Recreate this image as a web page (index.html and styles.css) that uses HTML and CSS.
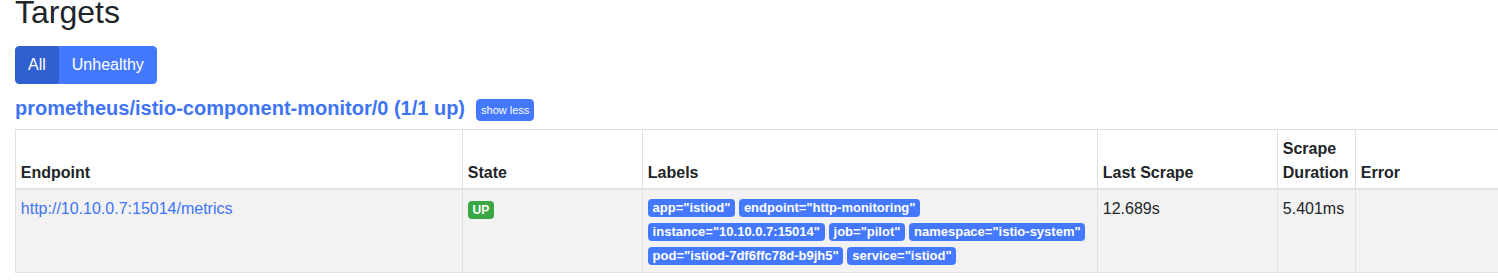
FILE: index.html
```html
<!DOCTYPE html>
<html lang="en">
<head>
    <meta charset="UTF-8">
    <meta name="viewport" content="width=device-width, initial-scale=1.0">
    <title>Targets</title>
    <link rel="stylesheet" href="styles.css">
</head>
<body>
    <div class="page">
        <h2 class="title">Targets</h2>
        <div class="filter">
            <span class="btn active">All</span>
            <span class="btn">Unhealthy</span>
        </div>
        <div class="pool-head">
            <a class="pool-name" href="#">prometheus/istio-component-monitor/0 (1/1 up)</a>
            <span class="btn-xs">show less</span>
        </div>
        <table class="targets">
            <colgroup>
                <col class="c-endpoint">
                <col class="c-state">
                <col class="c-labels">
                <col class="c-last">
                <col class="c-duration">
                <col class="c-error">
            </colgroup>
            <thead>
                <tr>
                    <th>Endpoint</th>
                    <th>State</th>
                    <th>Labels</th>
                    <th>Last Scrape</th>
                    <th>Scrape Duration</th>
                    <th>Error</th>
                </tr>
            </thead>
            <tbody>
                <tr>
                    <td><a href="#">http://10.10.0.7:15014/metrics</a></td>
                    <td><span class="badge up">UP</span></td>
                    <td>
                        <div class="labels">
                            <span class="badge label">app="istiod"</span>
                            <span class="badge label">endpoint="http-monitoring"</span>
                            <span class="badge label">instance="10.10.0.7:15014"</span>
                            <span class="badge label">job="pilot"</span>
                            <span class="badge label">namespace="istio-system"</span>
                            <span class="badge label">pod="istiod-7df6ffc78d-b9jh5"</span>
                            <span class="badge label">service="istiod"</span>
                        </div>
                    </td>
                    <td>12.689s</td>
                    <td>5.401ms</td>
                    <td></td>
                </tr>
            </tbody>
        </table>
    </div>
</body>
</html>
```
FILE: styles.css
```css
body {
    margin: 0;
    overflow: hidden;
    font-family: "Liberation Sans", Arial, sans-serif;
    font-size: 16px;
    line-height: 1.5;
    color: #212529;
    background: #fff;
}
a {
    color: #3f74f5;
    text-decoration: none;
}
.page {
    padding-left: 15px;
}
.title {
    margin: -7px 0 0;
    font-size: 32px;
    font-weight: 400;
    line-height: 1.2;
}
.filter {
    display: flex;
    margin-top: 14.6px;
}
.btn {
    display: inline-block;
    padding: 6px 12px;
    border: 1px solid #4479ff;
    background: #4479ff;
    color: #fff;
}
.btn:first-child {
    border-radius: 4px 0 0 4px;
}
.btn:last-child {
    border-radius: 0 4px 4px 0;
}
.btn.active {
    background: #305fcf;
    border-color: #305fcf;
}
.pool-head {
    display: flex;
    align-items: center;
    gap: 11px;
    margin-top: 12px;
    margin-bottom: 8.5px;
}
.pool-name {
    font-size: 20px;
    font-weight: 700;
    line-height: 1.2;
}
.btn-xs {
    display: inline-block;
    padding: 2px 4px;
    font-size: 11px;
    line-height: 16px;
    color: #fff;
    background: #4479ff;
    border: 1px solid #4479ff;
    border-radius: 4px;
    margin-top: 3px;
}
.targets {
    border-collapse: collapse;
    table-layout: fixed;
    width: 1485px;
}
.c-endpoint { width: 447px; }
.c-state { width: 180px; }
.c-labels { width: 455px; }
.c-last { width: 180px; }
.c-duration { width: 78px; }
.c-error { width: 145px; }
.targets th,
.targets td {
    padding: 6.8px 4.8px 2.8px;
    border: 1px solid #dee2e6;
    text-align: left;
    vertical-align: top;
}
.targets th {
    vertical-align: bottom;
    border-bottom: 2px solid #dee2e6;
    font-weight: 700;
}
.targets tbody tr {
    background: #f2f2f2;
}
.labels {
    display: flex;
    flex-wrap: wrap;
    column-gap: 4px;
    row-gap: 6px;
    padding: 2px 0 4px;
}
.badge {
    display: inline-block;
    padding: 3px 4.8px;
    font-size: 12px;
    font-weight: 700;
    line-height: 1;
    color: #fff;
    border-radius: 4px;
    white-space: nowrap;
}
.badge.up {
    background: #3aa745;
    margin-top: 3.5px;
}
.badge.label {
    font-size: 13px;
    padding: 2.5px 4.8px;
    background: #4479ff;
}
```
